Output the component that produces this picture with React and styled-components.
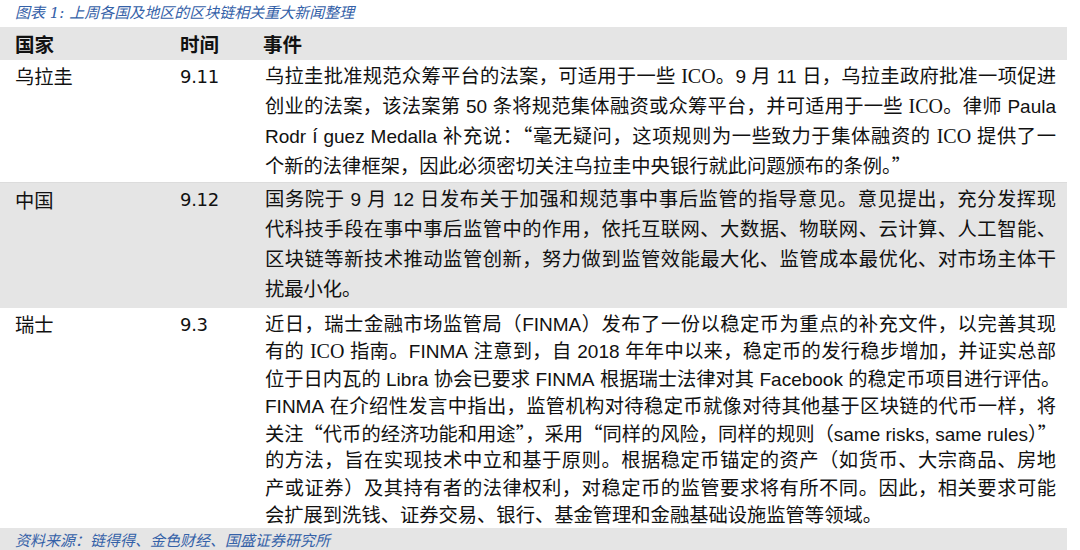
import React from "react";
import styled, { createGlobalStyle } from "styled-components";

const Global = createGlobalStyle`
  html, body { margin: 0; padding: 0; background: #ffffff; }
  body { width: 1080px; height: 550px; overflow: hidden; }
`;

const Page = styled.div`
  width: 1067px;
  font-family: "Liberation Sans", "Noto Sans CJK SC", sans-serif;
  color: #111111;
`;

const Caption = styled.div`
  height: 27px;
  padding-left: 15px;
  display: flex;
  align-items: center;
  font-family: "DejaVu Serif", "Noto Sans CJK SC", serif;
  font-style: italic;
  font-size: 15px;
  color: #3461a8;
  box-sizing: border-box;
  padding-bottom: 4px;
`;

const Row = styled.div`
  display: grid;
  grid-template-columns: 165px 85px 1fr;
  padding: ${(p) => p.$pad || "0"} 11px 0 15px;
  height: ${(p) => p.$h}px;
  box-sizing: border-box;
  background: ${(p) => (p.$gray ? "#e5e5e5" : "#ffffff")};
  border-bottom: ${(p) => (p.$line ? "1px solid #dcdcdc" : "none")};
  font-size: 19.3px;
  line-height: ${(p) => p.$lh || 29.5}px;
`;

const HeadCell = styled.div`
  font-weight: bold;
  font-size: 19.5px;
  line-height: 33px;
  font-family: "Noto Sans CJK SC", sans-serif;
  margin-left: ${(p) => p.$shift || 0}px;
`;

const Country = styled.div`
  font-family: "Noto Sans CJK SC", sans-serif;
`;

const DateCell = styled.div`
  font-family: "DejaVu Sans", sans-serif;
  font-size: 18px;
  letter-spacing: -0.3px;
`;

const Text = styled.div`
  min-width: 0;
`;

const Line = styled.span`
  display: block;
  white-space: nowrap;
  text-align: justify;
  text-align-last: ${(p) => (p.$last ? "left" : "justify")};
  height: ${(p) => p.$lh || 29.5}px;
`;

const Serif = styled.span`
  font-family: "Liberation Serif", serif;
  font-size: 20px;
`;

const Lat = styled.span`
  font-family: "Liberation Sans", sans-serif;
  font-size: 19px;
`;

const Q = styled.span`
  font-family: "Noto Sans CJK SC", sans-serif;
  font-feature-settings: "fwid" 1;
`;

const Footer = styled.div`
  height: 22px;
  background: #e5e5e5;
  padding-left: 15px;
  display: flex;
  align-items: center;
  font-family: "DejaVu Serif", "Noto Sans CJK SC", serif;
  font-style: italic;
  font-size: 15px;
  color: #3461a8;
`;

const rows = [
  {
    country: "乌拉圭",
    date: "9.11",
    gray: false,
    h: 123,
    pad: "2px",
    lh: 29.5,
    lines: [
      <>乌拉圭批准规范众筹平台的法案，可适用于一些 <Serif>ICO</Serif>。<Lat>9</Lat> 月 <Lat>11</Lat> 日，乌拉圭政府批准一项促进</>,
      <>创业的法案，该法案第 <Lat>50</Lat> 条将规范集体融资或众筹平台，并可适用于一些 <Serif>ICO</Serif>。律师 <Lat>Paula</Lat></>,
      <><Lat>Rodr</Lat> í <Lat>guez Medalla</Lat> 补充说：<Q>“</Q>毫无疑问，这项规则为一些致力于集体融资的 <Serif>ICO</Serif> 提供了一</>,
      <>个新的法律框架，因此必须密切关注乌拉圭中央银行就此问题颁布的条例。<Q>”</Q></>,
    ],
  },
  {
    country: "中国",
    date: "9.12",
    gray: true,
    h: 125,
    pad: "2px",
    lh: 30,
    lines: [
      <>国务院于 <Lat>9</Lat> 月 <Lat>12</Lat> 日发布关于加强和规范事中事后监管的指导意见。意见提出，充分发挥现</>,
      <>代科技手段在事中事后监管中的作用，依托互联网、大数据、物联网、云计算、人工智能、</>,
      <>区块链等新技术推动监管创新，努力做到监管效能最大化、监管成本最优化、对市场主体干</>,
      <>扰最小化。</>,
    ],
  },
  {
    country: "瑞士",
    date: "9.3",
    gray: false,
    h: 220,
    pad: "3px",
    lh: 27.3,
    lines: [
      <>近日，瑞士金融市场监管局（<Lat>FINMA</Lat>）发布了一份以稳定币为重点的补充文件，以完善其现</>,
      <>有的 <Serif>ICO</Serif> 指南。<Lat>FINMA</Lat> 注意到，自 <Lat>2018</Lat> 年年中以来，稳定币的发行稳步增加，并证实总部</>,
      <>位于日内瓦的 <Lat>Libra</Lat> 协会已要求 <Lat>FINMA</Lat> 根据瑞士法律对其 <Lat>Facebook</Lat> 的稳定币项目进行评估。</>,
      <><Lat>FINMA</Lat> 在介绍性发言中指出，监管机构对待稳定币就像对待其他基于区块链的代币一样，将</>,
      <>关注<Q>“</Q>代币的经济功能和用途<Q>”</Q>，采用<Q>“</Q>同样的风险，同样的规则（<Lat>same risks, same rules</Lat>）<Q>”</Q></>,
      <>的方法，旨在实现技术中立和基于原则。根据稳定币锚定的资产（如货币、大宗商品、房地</>,
      <>产或证券）及其持有者的法律权利，对稳定币的监管要求将有所不同。因此，相关要求可能</>,
      <>会扩展到洗钱、证券交易、银行、基金管理和金融基础设施监管等领域。</>,
    ],
  },
];

export default function App() {
  return (
    <>
      <Global />
      <Page>
        <Caption>图表 1: 上周各国及地区的区块链相关重大新闻整理</Caption>
        <Row $gray $h={33}>
          <HeadCell>国家</HeadCell>
          <HeadCell>时间</HeadCell>
          <HeadCell $shift={-2}>事件</HeadCell>
        </Row>
        {rows.map((r, i) => (
          <Row key={i} $gray={r.gray} $h={r.h} $pad={r.pad} $lh={r.lh} $line={!r.gray && i < 2}>
            <Country>{r.country}</Country>
            <DateCell>{r.date}</DateCell>
            <Text>
              {r.lines.map((l, j) => (
                <Line key={j} $lh={r.lh} $last={j === r.lines.length - 1}>
                  {l}
                </Line>
              ))}
            </Text>
          </Row>
        ))}
        <Footer>资料来源：链得得、金色财经、国盛证券研究所</Footer>
      </Page>
    </>
  );
}
